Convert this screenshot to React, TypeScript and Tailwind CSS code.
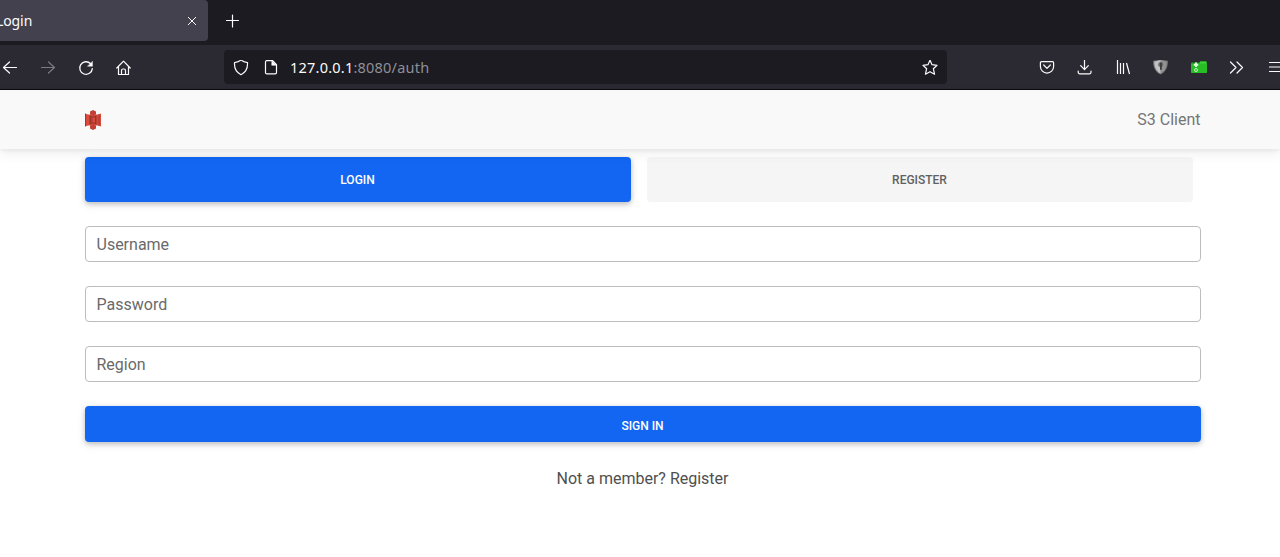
import type { ReactNode } from "react";

function Icon({ children, className = "" }: { children: ReactNode; className?: string }) {
  return (
    <svg
      viewBox="0 0 16 16"
      className={`h-4 w-4 shrink-0 ${className}`}
      fill="none"
      stroke="currentColor"
      strokeWidth="1.2"
      strokeLinecap="round"
      strokeLinejoin="round"
    >
      {children}
    </svg>
  );
}

function Tool({ children }: { children: ReactNode }) {
  return <span className="flex w-[38px] shrink-0 items-center justify-center">{children}</span>;
}

function TabStrip() {
  return (
    <div className="flex h-[45px] bg-[#1c1b22]">
      <div className="-ml-[4px] flex h-[41px] w-[212px] shrink-0 items-center justify-between rounded-b rounded-tr bg-[#42414d] pr-[8px] text-[14px] text-[#fbfbfe]">
        <span className="tracking-[-0.1px]">Login</span>
        <Icon>
          <path d="M4.300 4.300l7.400 7.400M11.700 4.300l-7.400 7.400" strokeWidth="1" />
        </Icon>
      </div>
      <div className="ml-[17px] flex h-[41px] items-center text-[#fbfbfe]">
        <Icon>
          <path d="M7.500 2v12M1.500 7.500h12" />
        </Icon>
      </div>
    </div>
  );
}

function Toolbar() {
  return (
    <div className="flex h-[45px] items-center overflow-hidden border-b border-[#0c0c0d] bg-[#2b2a33] text-[#fbfbfe]">
      <div className="-ml-[9px] flex w-[233px] shrink-0 pt-[2px]">
        <Tool>
          <Icon><path d="M14.500 7.500H1.500M7.500 2L1.500 7.500L7.500 13" /></Icon>
        </Tool>
        <Tool>
          <Icon className="text-[#7b7a80]"><path d="M1.500 7.500h13M8.500 2L14.500 7.500L8.500 13" /></Icon>
        </Tool>
        <Tool>
          <Icon>
            <path d="M12.600 3.700A6.300 6.300 0 1 0 14.300 8.600" strokeWidth="1.300" />
            <path d="M14.500 1.500v4.800H9.700z" fill="currentColor" strokeWidth="0.400" />
          </Icon>
        </Tool>
        <Tool>
          <Icon>
            <path d="M.8 8L7.500 1.200L14.200 8M2.500 6.500v8h10v-8M5.500 14V10.500a1.500 1.500 0 0 1 1.500-1.500h1a1.500 1.500 0 0 1 1.500 1.500V14" />
          </Icon>
        </Tool>
      </div>
      <div className="flex h-[34px] w-[723px] shrink-0 items-center rounded bg-[#1c1b22] px-[9px] pt-[2px]">
        <Icon>
          <path d="M8 0C9.800 1.500 12 2.300 14.500 2.600C14.800 7.500 13.300 12.200 8 14.700C2.700 12.200 1.200 7.500 1.500 2.600C4 2.300 6.200 1.500 8 0z" />
        </Icon>
        <Icon className="ml-[14px]">
          <path d="M3.700 .7h6L13.500 4.700V12.500a1.300 1.300 0 0 1-1.300 1.300H3.700A1.200 1.200 0 0 1 2.500 12.500V2A1.200 1.200 0 0 1 3.700 .7z" />
          <path d="M9 .7L13.500 5.200H9z" fill="currentColor" strokeWidth="0.600" />
        </Icon>
        <span className="ml-[11px] grow text-[14.500px] tracking-[0.22px] text-[#8f8f96]">
          <span className="text-[#fbfbfe]">127.0.0.1</span>:8080/auth
        </span>
        <Icon>
          <path d="M8 .2l2.050 4.500 5 .6-3.700 3.400 1.200 5.500L8 11.700l-4.550 2.500 1.200-5.500L.95 5.300l5-.6z" />
        </Icon>
      </div>
      <div className="ml-[81px] flex shrink-0 pt-[2px]">
        <Tool>
          <Icon>
            <path d="M2.500 1.600h11a1.100 1.100 0 0 1 1.100 1.100V6.500a6.600 6.600 0 0 1-13.200 0V2.700a1.100 1.100 0 0 1 1.100-1.100zM4.700 5L8 8.300l3.300-3.300" />
          </Icon>
        </Tool>
        <Tool>
          <Icon><path d="M7.500 0v9.500M3.700 5.700L7.500 9.700l3.800-4M1.200 11v1.300a1.500 1.500 0 0 0 1.500 1.500h9.800a1.500 1.500 0 0 0 1.500-1.500v-1.300" /></Icon>
        </Tool>
        <Tool>
          <Icon><path d="M2.500 0v14M5.500 3v11M8.500 3v11M11.500 3l3 11" strokeLinecap="butt" /></Icon>
        </Tool>
        <Tool>
          <svg viewBox="0 1 16 16" className="h-4 w-4">
            <path d="M7.500 0C9.500 1 12 1.500 14.800 1.700C15.200 8 12.800 13 7.500 15.600C2.200 13 -.2 8 .2 1.700C3 1.500 5.500 1 7.500 0z" fill="#777" />
            <path d="M7.500 1Q10 2.200 13.700 2.600C13.800 8 12 12 7.500 14.500z" fill="#929292" />
            <path d="M7.500 1Q5 2.200 1.300 2.600C1.200 8 3 12 7.500 14.500z" fill="#c2c2c2" />
            <circle cx="7.700" cy="5.500" r="2.500" fill="#6a6a6a" />
            <path d="M7 3.800h1.800v7H7z" fill="#3c3c3c" />
          </svg>
        </Tool>
        <Tool>
          <svg viewBox="0 0 16 16" className="h-4 w-4">
            <path d="M0 3.500Q0 2.500 1 2.500H8L9.500 1H15L16 2V12Q16 13 15 13H1Q0 13 0 12z" fill="#1d9f1d" />
            <path d="M0 3.700h5L8 3.200l8-.4v9.200q0 1-1 1H1q-1 0-1-1z" fill="#28bd25" />
            <path d="M9 1.800h6v1.800H9z" fill="#42cf3d" />
            <path d="M5 2.500v4.500M2.800 4.800h4.400" stroke="#e4ffe2" strokeWidth="2" />
            <circle cx="5" cy="10" r="1.500" fill="none" stroke="#c6f7c4" strokeWidth="1" />
          </svg>
        </Tool>
        <Tool>
          <Icon><path d="M1.500 2L7 7.500L1.500 13M8 2L13.500 7.500L8 13" /></Icon>
        </Tool>
        <Tool>
          <Icon><path d="M2.500 2.500h12M2.500 7h12M2.500 11.500h12" /></Icon>
        </Tool>
      </div>
    </div>
  );
}

function Logo() {
  return (
    <svg viewBox="0 0 16 20" className="h-5 w-4">
      <path d="M0 3.500L3 4.600H13L16 3.500V16.500L13 15.400H3L0 16.500z" fill="#d84b3e" />
      <path d="M0 3.500l1 .5v12l-1 .5z" fill="#a5372b" />
      <path d="M13.500 4.500l1-.4v11.800l-1-.4z" fill="#a5372b" />
      <path d="M4.500 5.500L8 6.500L11.500 5.500V14.500L8 13.500L4.500 14.500z" fill="#9c3428" />
      <path d="M8 0l3 1.500v3L8 5.500 5 4.500v-3z" fill="#c44034" />
      <path d="M8 20l3-1.500v-3l-3-1-3 1v3z" fill="#c44034" />
      <path d="M6 7.500h4v5H6z" fill="#d84b3e" />
      <path d="M6 7.500h1.500v5H6z" fill="#b53b2f" />
    </svg>
  );
}

function Field({ label }: { label: string }) {
  return (
    <input
      type="text"
      aria-label={label}
      placeholder={label}
      className="mb-6 block h-9 w-full rounded border border-[#bdbdbd] bg-white px-[10.5px] text-base text-[#4f4f4f] outline-none placeholder:text-[#6a6a6a] placeholder:opacity-100"
    />
  );
}

export default function App() {
  return (
    <div className="h-[557px] overflow-hidden bg-white font-['Roboto',sans-serif] text-[#4f4f4f]">
      <header className="font-['Noto_Sans',sans-serif]">
        <TabStrip />
        <Toolbar />
      </header>
      <nav className="relative z-10 flex h-[59px] items-center justify-between bg-[#f9f9f9] pr-[79.5px] pl-[85px] shadow-[0_4px_12px_0_rgba(0,0,0,0.07),0_2px_4px_rgba(0,0,0,0.05)]">
        <Logo />
        <span className="text-base text-[#757575]">S3 Client</span>
      </nav>
      <main className="pt-2 pr-[79px] pl-[85px]">
        <div className="mb-6 flex gap-4 pr-2 text-xs font-medium">
          <button className="h-[45px] flex-1 rounded bg-[#1266f1] pr-px text-white shadow-[0_2px_5px_0_rgba(0,0,0,0.2),0_2px_10px_0_rgba(0,0,0,0.1)]">
            LOGIN
          </button>
          <button className="h-[45px] flex-1 rounded bg-[#f5f5f5] pr-px text-[#616161]">REGISTER</button>
        </div>
        <Field label="Username" />
        <Field label="Password" />
        <Field label="Region" />
        <button className="block h-9 w-full rounded bg-[#1266f1] pt-[3px] pr-px text-xs font-medium text-white shadow-[0_2px_5px_0_rgba(0,0,0,0.2),0_2px_10px_0_rgba(0,0,0,0.1)]">
          SIGN IN
        </button>
        <p className="mt-[25px] pr-px text-center text-base">Not a member? Register</p>
      </main>
    </div>
  );
}
